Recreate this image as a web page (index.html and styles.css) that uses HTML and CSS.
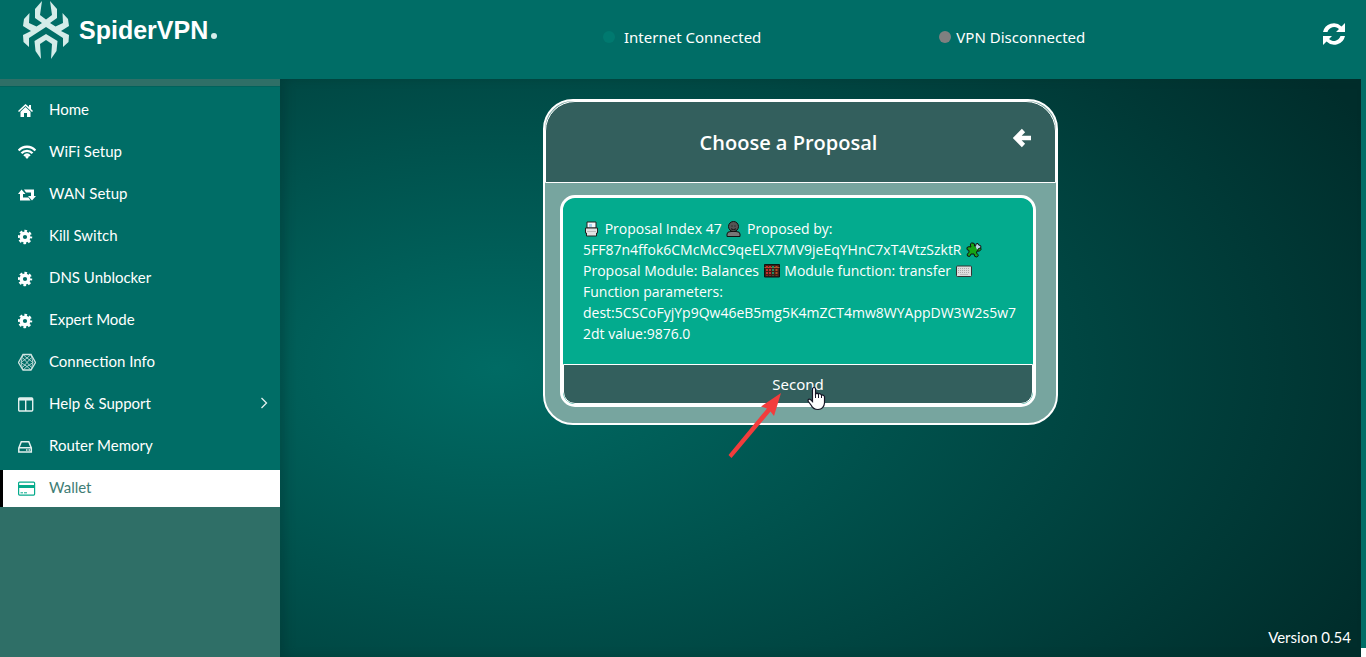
FILE: index.html
```
<!DOCTYPE html>
<html lang="en">

<head>
    <meta charset="UTF-8">
    <title>SpiderVPN</title>
    <meta name="viewport" content="width=device-width, initial-scale=1">
    <link rel="stylesheet" href="styles.css">
</head>

<body>
    <header class="topbar">
        <a href="#" class="logo">
            <svg class="logo-mark" viewBox="0 0 46 58" fill="#d5ece9">
                <path d="M19 0 L12 8 V17 L19 22 L13.500 25.500 L6 22 L6.500 12 L1 18 L0 25 L8 30 L0 34 L0.500 41 L6 46 L6 37 L23 26 L40 37 L40 46 L45.500 41 L46 34 L38 30 L46 25 L45 18 L39.500 12 L40 22 L32.500 25.500 L27 22 L34 17 V8 L27 0 L29 14 L23 18.500 L17 14 Z" />
                <path d="M23 33 L34.500 40 L33.500 50 L28 58 L29 43 L23 39 L17 43 L18 58 L12.500 50 L11.500 40 Z" />
            </svg>
            <span class="logo-text">SpiderVPN<span class="logo-dot"></span></span>
        </a>
        <div class="statuses">
            <div class="status"><span class="dot dot-on"></span>Internet Connected</div>
            <div class="status status-vpn"><span class="dot dot-off"></span>VPN Disconnected</div>
        </div>
        <button class="icon-button" type="button" aria-label="Refresh">
            <svg width="24" height="24" viewBox="0 0 24 24" fill="#fff">
                <path d="M1 10 A11 11 0 0 1 19.500 4.500 L23 1 V10 H14 L17 7 A7 7 0 0 0 5.500 10 Z" />
                <path d="M23 14 A11 11 0 0 1 4.500 19.500 L1 23 V14 H10 L7 17 A7 7 0 0 0 18.500 14 Z" />
            </svg>
        </button>
    </header>

    <div class="layout">
        <aside class="sidebar">
            <nav class="menu">
                <a href="#" class="menu-item">
                    <svg class="menu-icon" viewBox="0 0 18 18" fill="#fff"><path d="M7.500 3 L0 10 L1 11 L7.500 5 L14 11 L15 10 L13 8 V4 H11 V6 Z" /><path d="M7.500 6 L2.500 10.700 V16 H6 V12 H9 V16 H12.500 V10.700 Z" /></svg>
                    Home
                </a>
                <a href="#" class="menu-item">
                    <svg class="menu-icon" viewBox="0 0 18 18" fill="none" stroke="#fff" stroke-width="2.400"><path d="M0.700 7.500 C5 2.500 13 2.500 17.300 7.500 M3.500 10.300 C6.500 7 11.500 7 14.500 10.300 M6.200 13 C8 11 10 11 11.800 13" /><path d="M9 12.500 L11 13.800 L9 16 L7 13.800 Z" fill="#fff" stroke="none" /></svg>
                    WiFi Setup
                </a>
                <a href="#" class="menu-item">
                    <svg class="menu-icon" viewBox="0 0 18 18" fill="#fff"><path d="M3.500 4.500 L7.500 9 H5 V12.500 H10.500 L12.500 15.500 H2 V9 H0 Z" /><path d="M14 15.500 L18 11 H16 V4.500 H6 L8 7.500 H13 V11 H10 Z" /></svg>
                    WAN Setup
                </a>
                <a href="#" class="menu-item">
                    <svg class="menu-icon" viewBox="0 0 18 18"><use href="#gear" /></svg>
                    Kill Switch
                </a>
                <a href="#" class="menu-item">
                    <svg class="menu-icon" viewBox="0 0 18 18"><use href="#gear" /></svg>
                    DNS Unblocker
                </a>
                <a href="#" class="menu-item">
                    <svg class="menu-icon" viewBox="0 0 18 18"><use href="#gear" /></svg>
                    Expert Mode
                </a>
                <a href="#" class="menu-item">
                    <svg class="menu-icon" viewBox="0 0 18 18" fill="none" stroke="#cfe5e2"><path d="M5 1.500 H13 L17.500 9.500 L13 17 H5 L0.500 9.500 Z" stroke-width="1.300" /><path d="M5 1.500 L3 9.500 L5 17 M13 1.500 L15 9.500 L13 17 M3 9.500 L9 5 L15 9.500 L9 13.500 Z M5 1.500 L9 5 L13 1.500 M5 17 L9 13.500 L13 17 M5 5 L13 14 M13 5 L5 14" stroke-width="0.800" /></svg>
                    Connection Info
                </a>
                <a href="#" class="menu-item">
                    <svg class="menu-icon" viewBox="0 0 18 18" fill="none" stroke="#e2f0ee"><rect x="0.700" y="3" width="14" height="13" rx="1" stroke-width="1.400" /><path d="M0.700 4.300 H14.700" stroke-width="2.500" /><path d="M7.700 4 V16" stroke-width="1.400" /></svg>
                    Help &amp; Support
                    <svg class="chevron" width="8" height="12" viewBox="0 0 8 12" fill="none" stroke="#e2f0ee" stroke-width="1.300"><path d="M1.500 1 L6.500 6 L1.500 11" /></svg>
                </a>
                <a href="#" class="menu-item">
                    <svg class="menu-icon" viewBox="0 0 18 18" fill="none" stroke="#e2f0ee" stroke-width="1.500"><path d="M0.800 11 L3.300 4.700 H10.800 L13.300 11 V15 H0.800 Z M0.800 10.800 H13.300" /><path d="M8 13 H9.500 M10.500 13 H12" /></svg>
                    Router Memory
                </a>
                <a href="#" class="menu-item active">
                    <svg class="menu-icon" viewBox="0 0 18 18" fill="none" stroke="#06ab8c"><rect x="0.600" y="3.100" width="16" height="13" rx="1" stroke-width="1.200" /><path d="M0.600 7.500 H16.600" stroke-width="3" /><path d="M2.500 13.800 H5 M6 13.800 H9" /></svg>
                    Wallet
                </a>
            </nav>
        </aside>

        <main class="content">
            <section class="card">
                <div class="card-header">
                    <h1 class="card-title">Choose a Proposal</h1>
                    <button class="icon-button back" type="button" aria-label="Back">
                        <svg width="18" height="20" viewBox="0 0 18 20" fill="none" stroke="#fff" stroke-width="4.600"><path d="M10.500 2.500 L3 10 L10.500 17.500 M4 10 H18" /></svg>
                    </button>
                </div>
                <div class="card-body">
                    <article class="proposal">
                        <p class="proposal-text">
                            <svg class="emoji" viewBox="0 0 16 16" stroke="#222"><path d="M3 1 H12 V7 H3 Z" fill="#f4f7f9" /><path d="M5 3 H8 V6 H5 Z" fill="#a9d3ee" stroke="none" /><path d="M1.500 7 H13.500 V12 H12.500 V15 H2.500 V12 H1.500 Z" fill="#e2e2e2" /><path d="M3 10.500 H12" stroke="#bbb" /></svg>
                            Proposal Index 47
                            <svg class="emoji" viewBox="0 0 16 16" fill="#555" stroke="#111"><path d="M1 15.500 V13 Q1 10.500 5 10.500 H10 Q14 10.500 14 13 V15.500 Z" fill="#777" /><circle cx="7.500" cy="5.500" r="5" /><path d="M5 7.800 Q7.500 9.500 10 7.800 M5.500 5 H6.500 M8.500 5 H9.500" /></svg>
                            <span>Proposed by:</span>
                            <span>5FF87n4ffok6CMcMcC9qeELX7MV9jeEqYHnC7xT4VtzSzktR</span>
                            <svg class="emoji" viewBox="0 0 16 16" fill="#16a516" stroke="#111"><path d="M5 5 Q3 0.500 7 1 Q9 1 8.500 4 L11 5 Q15 4 15 7.500 Q14 10 11 9 L10.500 11 Q14 14 10.500 15 Q8 15 8 12 L5 12 Q4 16 1.500 14 Q0 12 3 10.500 L3 8.500 Q0 8 1 5.500 Q3 4 5 5 Z" /><path d="M9.500 4 Q10 0.500 12 1.500 L12.500 3 Q15.500 3 15 5.500 L12 7 L11.500 9" fill="#b9d9e6" /></svg>
                            Proposal Module: Balances
                            <svg class="emoji" viewBox="0 0 16 16"><path d="M0.500 1.500 H15.500 V14 H0.500 Z" fill="#421f17" stroke="#111" /><path d="M0.500 4.500 H15.500" stroke="#a66132" /><path d="M3 3 V12.500 M6 3 V12.500" stroke="#c52e2b" stroke-width="2" stroke-dasharray="2 1" /><path d="M9 3 V12.500" stroke="#258b61" stroke-width="2" stroke-dasharray="2 1" /><path d="M12.500 3 V12.500" stroke="#b64b24" stroke-width="2" stroke-dasharray="2 1" /></svg>
                            Module function: transfer
                            <svg class="emoji" viewBox="0 0 16 16"><rect x="0.500" y="3" width="15" height="10.500" rx="1" fill="#ddd" stroke="#333" /><path d="M2 5.500 H14 M2 7.500 H14 M2 9.500 H14" stroke="#aaa" stroke-dasharray="1 1" /><path d="M4 11.500 H12" stroke="#bbb" /></svg>
                            Function parameters: dest:5CSCoFyjYp9Qw46eB5mg5K4mZCT4mw8WYAppDW3W2s5w72dt value:9876.0
                        </p>
                        <button class="second-button" type="button">Second</button>
                    </article>
                </div>
            </section>
            <footer class="version">Version 0.54</footer>
        </main>
    </div>

    <!-- pointer and arrow lie over the Second button -->
    <svg class="pointer-arrow" width="56" height="70" viewBox="0 0 56 70" fill="#f23c3c">
        <path d="M53 3 L33 16.500 L39 18.500 L0.500 65 L3.500 68 L42.500 21.500 L46 26 Z" />
    </svg>
    <svg class="pointer-hand" width="19" height="25" viewBox="0 0 19 25">
        <path d="M5.500 2.500 Q7 0.500 8.500 2.500 V8 Q10 6.500 11.500 8 Q13 7 14.300 9 Q16 8.500 17.500 10.500 V17 Q17 23 11 23.500 Q6 23.500 4 19 L1 15 Q1 12.500 3.500 13.500 L5.500 15.500 Z" fill="#fff" stroke="#151525" stroke-width="1.200" />
        <path d="M8.500 8 V12 M11.500 8 V12 M14.500 9 V12" stroke="#151525" />
    </svg>

    <svg class="sprite">
        <defs>
            <g id="gear">
                <circle cx="7" cy="10" r="3.800" fill="none" stroke="#fff" stroke-width="3.400" />
                <circle cx="7" cy="10" r="5.900" fill="none" stroke="#fff" stroke-width="2.600" stroke-dasharray="2.600 2.034" stroke-dashoffset="1.300" />
            </g>
        </defs>
    </svg>
</body>

</html>
```
FILE: styles.css
```
* {
    box-sizing: border-box;
}

body {
    margin: 0;
    min-height: 100vh;
    display: flex;
    flex-direction: column;
    background: #006d66 linear-gradient(white, white) right bottom / 5px 9px no-repeat;
    color: white;
    font-family: "Noto Sans", sans-serif;
}

a {
    color: inherit;
    text-decoration: none;
}

.icon-button {
    display: flex;
    padding: 0;
    border: none;
    background: none;
    cursor: pointer;
}

.topbar {
    display: flex;
    align-items: center;
    height: 79px;
    padding: 0 20px 0 23px;
    background-color: #006d66;
}

.topbar .icon-button {
    margin: 0 0 11px auto;
}

.logo {
    display: flex;
    align-items: center;
    gap: 10px;
    width: 580px;
    margin-bottom: 20px;
}

.logo-mark {
    width: 46px;
    height: 58px;
}

.logo-text {
    padding-top: 2px;
    font-family: "Liberation Sans", Arial, sans-serif;
    font-size: 25px;
    font-weight: bold;
}

.logo-dot {
    display: inline-block;
    width: 6px;
    height: 6px;
    margin-left: 3px;
    border-radius: 50%;
    background-color: #d5ece9;
}

.statuses {
    display: flex;
    gap: 178px;
    margin-bottom: 6px;
    font-size: 15px;
}

.status {
    display: flex;
    align-items: center;
    gap: 9px;
    white-space: nowrap;
}

.status-vpn {
    gap: 5px;
}

.dot {
    width: 12px;
    height: 12px;
    border-radius: 50%;
}

.dot-on {
    background-color: #00796f;
}

.dot-off {
    background-color: #808080;
}

.layout {
    display: flex;
    flex: 1;
    padding-right: 5px;
}

.sidebar {
    flex: none;
    width: 280px;
    padding-top: 7px;
    background-color: #2f6f67;
}

.menu {
    display: flex;
    flex-direction: column;
    gap: 5px;
    padding-top: 5px;
    border-top: 1px solid #00625c;
    background-color: #006d66;
}

.menu-item {
    display: flex;
    align-items: center;
    height: 37px;
    padding: 0 15px 4px;
    border-left: 3px solid transparent;
    font-family: Lato, sans-serif;
    font-size: 15px;
}

.menu-item.active {
    border-left-color: black;
    background-color: white;
    color: #3f7d75;
}

.menu-icon {
    width: 18px;
    height: 18px;
    margin-top: 2px;
    margin-right: 13px;
}

.chevron {
    margin-left: auto;
    margin-right: -3px;
}

.content {
    display: flex;
    flex: 1;
    flex-direction: column;
    align-items: center;
    padding: 20px 10px 11px;
    background: radial-gradient(90% 95% at 20% 50%, #006b64, #002d2b);
    box-shadow: inset 6px 0 10px rgba(0, 45, 43, 0.3);
}

.card {
    width: 515px;
    max-width: 100%;
    margin-right: 40px;
    border: 2px solid white;
    border-radius: 30px;
    background-color: #77a59f;
}

.card-header {
    display: grid;
    grid-template-columns: 1fr auto 1fr;
    align-items: center;
    height: 82px;
    padding: 0 24px 0 0;
    border: 1px solid white;
    border-radius: 30px 30px 0 0;
    background-color: #335f5d;
}

.card-title {
    grid-column: 2;
    margin: 0;
    font-family: "Open Sans", sans-serif;
    font-size: 20px;
    font-weight: 600;
}

.back {
    justify-self: end;
    margin-bottom: 9px;
}

.card-body {
    padding: 12px 20px 16px 15px;
}

.proposal {
    overflow: hidden;
    border: 3px solid white;
    border-radius: 15px;
    background-color: #03ab8e;
}

.proposal-text {
    margin: 0;
    padding: 20px 14px 20px 20px;
    font-family: "Open Sans", sans-serif;
    font-size: 14px;
    line-height: 21px;
    overflow-wrap: anywhere;
}

.emoji {
    width: 18px;
    height: 16px;
    vertical-align: -3px;
}

.second-button {
    display: block;
    width: 100%;
    height: 40px;
    border: 1px solid white;
    border-radius: 0 0 12px 12px;
    background-color: #335f5d;
    color: white;
    font-family: inherit;
    font-size: 15px;
    cursor: pointer;
}

.version {
    align-self: flex-end;
    margin-top: auto;
    font-family: Lato, sans-serif;
    font-size: 15px;
}

.pointer-arrow {
    position: absolute;
    left: 728px;
    top: 390px;
}

.pointer-hand {
    position: absolute;
    left: 807px;
    top: 386px;
}

.sprite {
    position: absolute;
    width: 0;
    height: 0;
}
```
